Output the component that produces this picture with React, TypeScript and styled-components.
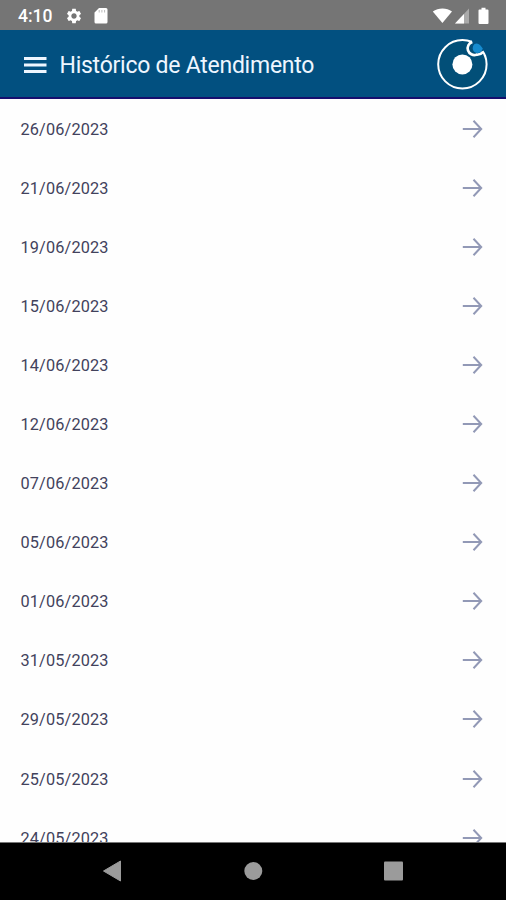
import React from "react";
import styled, { createGlobalStyle } from "styled-components";

const GlobalStyle = createGlobalStyle`
  * { box-sizing: border-box; }
  body { margin: 0; font-family: Roboto, "Liberation Sans", sans-serif; }
`;

const Screen = styled.div`
  display: flex;
  flex-direction: column;
  width: 506px;
  height: 900px;
  overflow: hidden;
  background: #fefefe;
`;

const StatusBar = styled.div`
  display: flex;
  flex: none;
  align-items: center;
  height: 30px;
  padding: 1px 16px 0 18px;
  background: #757575;
  color: #fff;
`;

const Clock = styled.span`
  width: 47px;
  padding-top: 1px;
  font-size: 17.5px;
  font-weight: 500;
  line-height: 20px;
`;

const StatusIcons = styled.div<{ $end?: boolean }>`
  display: flex;
  align-items: center;
  gap: ${(p) => (p.$end ? "2px" : "11px")};
  margin-left: ${(p) => (p.$end ? "auto" : "0")};
`;

const Header = styled.header`
  display: flex;
  flex: none;
  align-items: center;
  height: 69px;
  padding: 1px 18px 0 24px;
  background: #025080;
  border-bottom: 2px solid #160f6e;
`;

const MenuButton = styled.button`
  display: flex;
  padding: 1px 0 0;
  border: 0;
  background: none;
`;

const Title = styled.h1`
  flex: 1;
  margin: 4px 0 0 12.5px;
  color: #eef6ff;
  font-size: 23px;
  font-weight: 400;
  line-height: 30px;
  letter-spacing: -0.25px;
  white-space: nowrap;
`;

const List = styled.ul`
  flex: 1;
  min-height: 0;
  margin: 0;
  padding: 0;
  overflow: hidden;
  list-style: none;
`;

const Row = styled.li`
  display: flex;
  align-items: center;
  justify-content: space-between;
  height: 59.1px;
  padding: 0 23px 0 20.5px;
`;

const DateText = styled.span`
  color: #42425c;
  font-size: 16.3px;
  line-height: 20px;
  letter-spacing: 0.14px;
  padding-top: 2px;
`;

const NavBar = styled.nav`
  display: flex;
  flex: none;
  align-items: center;
  justify-content: space-between;
  height: 58px;
  padding: 0 102px 2px;
  background: #000;
  border-top: 1px solid #777;
`;

const dates = [
  "26/06/2023", "21/06/2023", "19/06/2023", "15/06/2023", "14/06/2023",
  "12/06/2023", "07/06/2023", "05/06/2023", "01/06/2023", "31/05/2023",
  "29/05/2023", "25/05/2023", "24/05/2023",
];

const GearIcon = () => (
  <svg width="18" height="18" viewBox="0 0 24 24" fill="#fff">
    <path d="M19.14 12.94c.04-.3.06-.61.06-.94 0-.32-.02-.64-.07-.94l2.03-1.58c.18-.14.23-.41.12-.61l-1.92-3.32c-.12-.22-.37-.29-.59-.22l-2.39.96c-.5-.38-1.03-.7-1.62-.94l-.36-2.54c-.04-.24-.24-.41-.48-.41h-3.84c-.24 0-.43.17-.47.41l-.36 2.54c-.59.24-1.13.57-1.62.94l-2.39-.96c-.22-.08-.47 0-.59.22L2.74 8.87c-.12.21-.08.47.12.61l2.03 1.58c-.05.3-.09.63-.09.94s.02.64.07.94l-2.03 1.58c-.18.14-.23.41-.12.61l1.92 3.32c.12.22.37.29.59.22l2.39-.96c.5.38 1.03.7 1.62.94l.36 2.54c.05.24.24.41.48.41h3.84c.24 0 .44-.17.47-.41l.36-2.54c.59-.24 1.13-.56 1.62-.94l2.39.96c.22.08.47 0 .59-.22l1.92-3.32c.12-.22.07-.47-.12-.61l-2.01-1.58zM12 15.6c-1.98 0-3.6-1.62-3.6-3.6s1.62-3.6 3.6-3.6 3.6 1.62 3.6 3.6-1.62 3.6-3.6 3.6z" />
  </svg>
);

const SdCardIcon = () => (
  <svg width="14" height="16" viewBox="0 0 14 16">
    <path d="M5 0h7a1.500 1.500 0 0 1 1.500 1.500v12.500a1.500 1.500 0 0 1-1.500 1.500H2A1.500 1.500 0 0 1 .5 14V4.500z" fill="#fff" />
    <path d="M5.200 2v2.500M7.900 2v2.500M10.600 2v2.500" stroke="#bbb" strokeWidth="1" />
  </svg>
);

const WifiIcon = () => (
  <svg width="20" height="16" viewBox="0 0 20 16">
    <path d="M.8 3.500C6.200 -.4 14.800 -.4 20 3.500L10.400 15z" fill="#fff" />
  </svg>
);

const SignalIcon = () => (
  <svg width="15" height="16" viewBox="0 0 15 16">
    <path d="M15 .5V15.500H1z" fill="#aaa" />
    <path d="M10 6V15.500H1z" fill="#fff" />
  </svg>
);

const BatteryIcon = () => (
  <svg width="19" height="18" viewBox="0 0 19 18">
    <path d="M10.500 .8h4v1.800H16.500a1 1 0 0 1 1 1V16a1 1 0 0 1-1 1H8.500a1 1 0 0 1-1-1V3.600a1 1 0 0 1 1-1h2z" fill="#fff" />
  </svg>
);

const MenuIcon = () => (
  <svg width="23" height="18" viewBox="0 0 23 18">
    <path d="M0 2.500h22.500M0 9h22.500M0 15.500h22.500" stroke="#eef6ff" strokeWidth="2.800" />
  </svg>
);

const OrbitLogo = () => (
  <svg width="52" height="52" viewBox="0 0 52 52">
    <circle cx="26.400" cy="26.300" r="24.200" fill="#024f78" stroke="#fff" strokeWidth="2" />
    <circle cx="26.400" cy="26.400" r="10" fill="#fff" />
    <path d="M36 0H52V17H47.500L41 16L35 10z" fill="#025080" />
    <path d="M36.300 3.900A6.600 6.600 0 0 0 40.500 16.700Q44.500 17 47 14.200" fill="none" stroke="#fff" strokeWidth="2.700" />
    <path d="M46.500 13.200a24.200 24.200 0 0 1 2.400 4.200" fill="none" stroke="#fff" strokeWidth="2" />
    <path d="M38.500 6Q41.500 4.600 44 7L46.800 10.500Q45.200 15.200 41.200 15Q36.800 14.500 36.700 10.300Q36.800 7.600 38.500 6z" fill="#168bcf" />
  </svg>
);

const ArrowIcon = () => (
  <svg width="21" height="20" viewBox="0 0 21 20" fill="none" stroke="#9299b6" strokeWidth="2">
    <path d="M.8 10H18.800M11.500 1.800L19.200 10L11.500 18.200" />
  </svg>
);

const BackIcon = () => (
  <svg width="20" height="22" viewBox="0 0 20 22">
    <path d="M18.500 1V21L1.500 11z" fill="#9b9b9b" stroke="#9b9b9b" strokeLinejoin="round" />
  </svg>
);

const HomeIcon = () => (
  <svg width="20" height="20" viewBox="0 0 20 20">
    <circle cx="10.300" cy="10" r="9" fill="#9b9b9b" />
  </svg>
);

const RecentIcon = () => (
  <svg width="20" height="20" viewBox="0 0 20 20">
    <rect x="0" y=".5" width="19" height="19" rx="1" fill="#9b9b9b" />
  </svg>
);

export default function App() {
  return (
    <Screen>
      <GlobalStyle />
      <StatusBar>
        <Clock>4:10</Clock>
        <StatusIcons><GearIcon /><SdCardIcon /></StatusIcons>
        <StatusIcons $end><WifiIcon /><SignalIcon /><BatteryIcon /></StatusIcons>
      </StatusBar>
      <Header>
        <MenuButton aria-label="Menu"><MenuIcon /></MenuButton>
        <Title>Histórico de Atendimento</Title>
        <OrbitLogo />
      </Header>
      <List>
        {dates.map((date) => (
          <Row key={date}>
            <DateText>{date}</DateText>
            <ArrowIcon />
          </Row>
        ))}
      </List>
      <NavBar><BackIcon /><HomeIcon /><RecentIcon /></NavBar>
    </Screen>
  );
}
